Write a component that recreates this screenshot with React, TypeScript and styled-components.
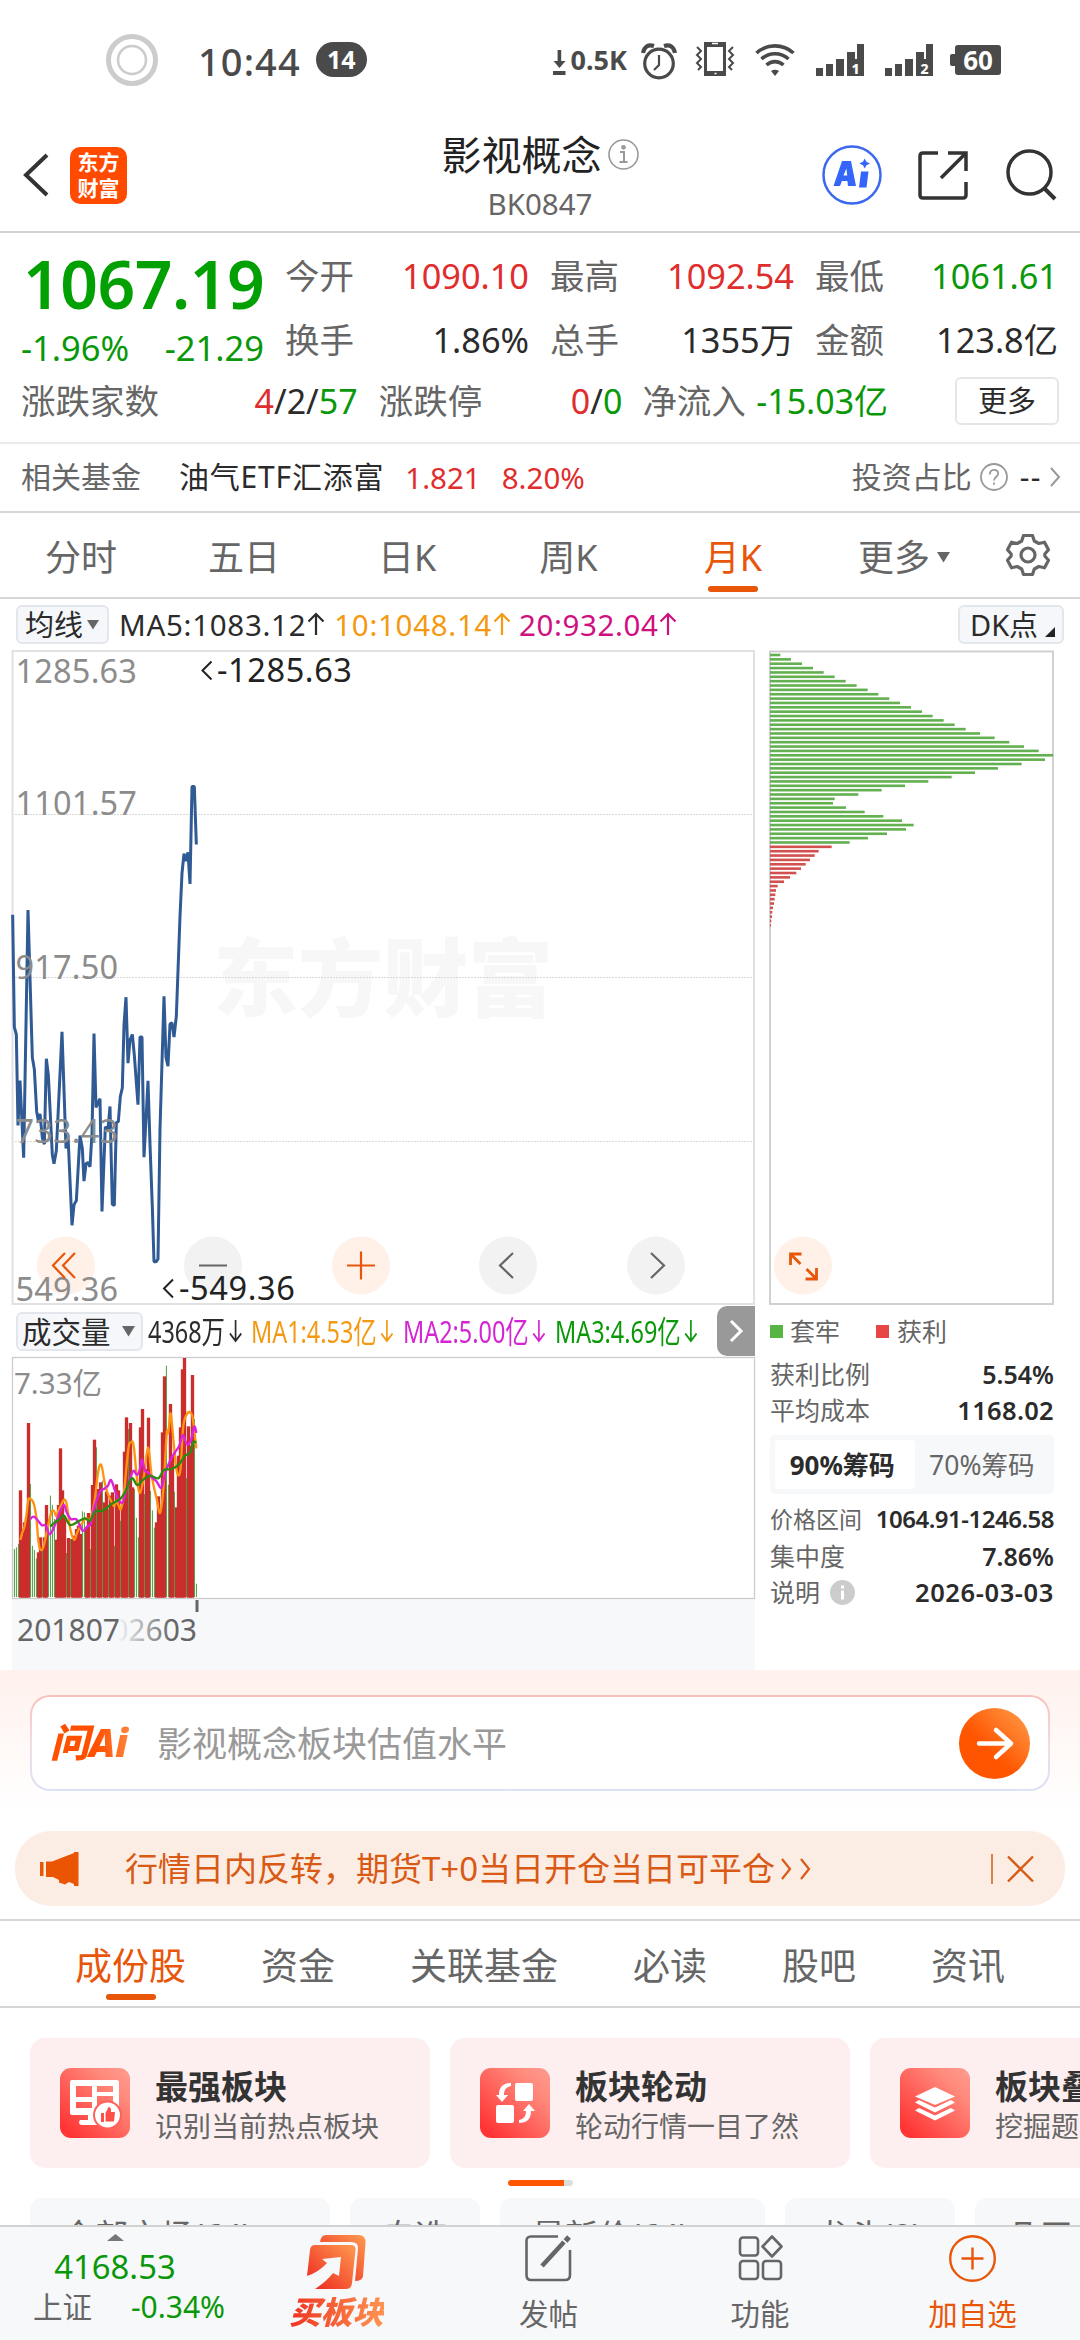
import React from 'react';
import styled, { createGlobalStyle, css } from 'styled-components';

const GlobalStyle = createGlobalStyle`
  * { box-sizing: border-box; }
  body { margin: 0; background: #fff; }
  text { white-space: pre; }
`;

const FONT = '"Noto Sans", "Noto Sans CJK SC", sans-serif';
const UP = '#e02d2d';
const DOWN = '#0a980a';
const INK = '#2b2b2b';
const GRAY = '#666';
const ORANGE = '#e8560a';

const row = css`
  display: flex;
  align-items: center;
`;

interface LabelProps {
  $size?: number;
  $color?: string;
  $weight?: number;
  $left?: number;
  $spacing?: number;
  $top?: number;
}

const Label = styled.span<LabelProps>`
  font-size: ${p => p.$size ?? 30}px;
  color: ${p => p.$color ?? GRAY};
  font-weight: ${p => p.$weight ?? 400};
  margin-left: ${p => p.$left ?? 0}px;
  margin-top: ${p => p.$top ?? 0}px;
  letter-spacing: ${p => p.$spacing ?? 0}px;
  line-height: 1;
  white-space: nowrap;
`;

const Page = styled.div`
  width: 1080px;
  height: 2340px;
  overflow: hidden;
  background: #fff;
  font-family: ${FONT};
  line-height: 1;
  display: flex;
  flex-direction: column;
  color: ${INK};
`;

const Icon = styled.svg<{ $left?: number; $top?: number }>`
  display: block;
  flex: none;
  margin-left: ${p => p.$left ?? 0}px;
  margin-top: ${p => p.$top ?? 0}px;
  overflow: visible;
`;

/* ---------- status bar ---------- */

const StatusBar = styled.header`
  ${row};
  height: 120px;
  padding: 0 79px 0 105px;
`;

const CountBadge = styled.span`
  ${row};
  justify-content: center;
  width: 51px;
  height: 35px;
  margin-left: 15px;
  border-radius: 18px;
  background: #4a4a4a;
  color: #fff;
  font-size: 25px;
  font-weight: 700;
`;

const StatusRight = styled.div`
  ${row};
  margin-left: auto;
`;

const Signal = ({ n, left }: { n: string; left: number }) => (
  <Icon $left={left} width="48" height="32" viewBox="0 0 48 32" fill="#4a4a4a">
    <path d="M0 24h7v8H0zM10 20h7v12h-7zM20 15h8v17h-8zM31 8h8v7h2V0h7v32H31z" />
    <text x="39.5" y="29.5" fontSize="14" fontWeight="800" fill="#fff" textAnchor="middle" fontFamily={FONT}>{n}</text>
  </Icon>
);

const Status = () => (
  <StatusBar>
    <Icon width="54" height="54" viewBox="0 0 54 54" fill="none" stroke="#ccc">
      <circle cx="27" cy="27" r="23.5" strokeWidth="5" />
      <circle cx="27" cy="27" r="14" strokeWidth="2.6" />
    </Icon>
    <Label $size={38} $color="#4a4a4a" $left={39} $weight={500} $top={2} $spacing={1.1}>10:44</Label>
    <CountBadge>14</CountBadge>
    <StatusRight>
      <Icon $top={5} width="13" height="25" viewBox="0 0 13 25" fill="#4a4a4a">
        <path d="M4.6 0h3.6v11h4.3L6.5 18 .5 11h4.1zM0 21h12.5v4H0z" />
      </Icon>
      <Label $size={27} $color="#4a4a4a" $weight={700} $left={5}>0.5K</Label>
      <Icon $left={15} $top={4} width="34" height="36" viewBox="0 0 34 36" fill="none" stroke="#4a4a4a" strokeWidth="3.2">
        <circle cx="17" cy="19.5" r="14.3" />
        <path d="M17 11v10l-5 5" strokeWidth="2.2" />
        <path d="M1 9C2 3 6 0 12 2M33 9C32 3 28 0 22 2" strokeWidth="4" />
      </Icon>
      <Icon $left={19} $top={-1} width="40" height="36" viewBox="0 0 40 36" fill="none" stroke="#4a4a4a">
        <rect x="10.5" y="2.5" width="19" height="31" strokeWidth="3" />
        <path d="M9 4h22M9 32h22" strokeWidth="4" />
        <path d="M2 6l4 4-4 4 4 4-4 4 4 4-3 3M38 6l-4 4 4 4-4 4 4 4-4 4 3 3" strokeWidth="2" />
        <path d="M17 2.5h6M19.500 32.500h2" stroke="#fff" strokeWidth="1.500" />
      </Icon>
      <Icon $left={20} width="40" height="33" viewBox="0 0 40 33" fill="none" stroke="#4a4a4a" strokeWidth="3.6">
        <path d="M1.500 10C12 .5 28 .5 38.500 10M6.500 16C14 9 26 9 33.500 16M11.500 22C16.500 17.500 23.500 17.500 28.500 22" />
        <path d="M16 28c2.400-1.800 5.600-1.800 8 0l-4 5z" fill="#4a4a4a" stroke="none" />
      </Icon>
      <Signal n="1" left={21} />
      <Signal n="2" left={21} />
      <Icon $left={17} width="51" height="30" viewBox="0 0 51 30">
        <path d="M8 0h40q3 0 3 3v24q0 3-3 3H8q-3 0-3-3v-6H2q-2 0-2-2v-8q0-2 2-2h3V3q0-3 3-3z" fill="#4a4a4a" />
        <text x="28" y="24.500" fontSize="26" fontWeight="700" fill="#fff" textAnchor="middle" fontFamily={FONT}>60</text>
      </Icon>
    </StatusRight>
  </StatusBar>
);

/* ---------- title bar ---------- */

const TitleBar = styled.div`
  display: grid;
  grid-template-columns: 270px 540px 270px;
  height: 113px;
  border-bottom: 2px solid #d2d2d2;
`;
const TitleLeft = styled.div`${row}; padding-left: 23px;`;
const TitleRight = styled.div`${row}; padding-left: 12px;`;
const TitleCenter = styled.div`
  display: flex;
  flex-direction: column;
  align-items: center;
  padding-top: 15px;
`;
const TitleLine = styled.div`${row};`;
const AppLogo = styled.div`
  width: 57px;
  height: 57px;
  margin-left: 21px;
  border-radius: 10px;
  background: #ff4a00;
  color: #fff;
  font-size: 21px;
  font-weight: 700;
  line-height: 26px;
  text-align: center;
  padding: 2px 0 0;
`;

const Title = () => (
  <TitleBar>
    <TitleLeft>
      <Icon width="26" height="44" viewBox="0 0 26 44" fill="none" stroke="#333" strokeWidth="4">
        <path d="M24 2L3 22l21 20" />
      </Icon>
      <AppLogo>东方<br />财富</AppLogo>
    </TitleLeft>
    <TitleCenter>
      <TitleLine>
        <Label $size={40} $color="#222">影视概念</Label>
        <Icon $left={6} width="31" height="31" viewBox="0 0 31 31" fill="none" stroke="#999" strokeWidth="1.6">
          <circle cx="15.500" cy="15.500" r="14.500" />
          <path d="M12 13h4v10M11.500 23h8" strokeWidth="2" />
          <circle cx="15.500" cy="8.300" r="1.600" fill="#999" />
        </Icon>
      </TitleLine>
      <Label $size={29.5} $color={GRAY} $top={14.5}>BK0847</Label>
    </TitleCenter>
    <TitleRight>
      <Icon width="60" height="60" viewBox="0 0 60 60">
        <circle cx="30" cy="30" r="28.500" fill="none" stroke="#3b68ef" strokeWidth="2.500" />
        <path d="M11.500 41L20 16h9l5 25h-8l-.6-5h-5.500L18 41zM21.500 30.500h3.700l-.8-7z" fill="#3566fb" fillRule="evenodd" />
        <path d="M39 26.500h7.500L44.500 42.500H37z" fill="#3566fb" />
        <path d="M42.700 13.500l1.700 3.300 3.600 1.700-3.600 1.700-1.700 3.300-1.700-3.300-3.600-1.700 3.600-1.700z" fill="#3566fb" />
      </Icon>
      <Icon $left={36} width="50" height="50" viewBox="0 0 50 50" fill="none" stroke="#333" strokeWidth="3.500">
        <path d="M20 3H5Q2 3 2 6v39q0 3 3 3h40q3 0 3-3V32" />
        <path d="M30 3h18v18M47 4L23 28" />
      </Icon>
      <Icon $left={38} width="50" height="50" viewBox="0 0 50 50" fill="none" stroke="#333" strokeWidth="3.500">
        <circle cx="23.500" cy="22.500" r="21.500" />
        <path d="M38 38l11 11" strokeWidth="4" />
      </Icon>
    </TitleRight>
  </TitleBar>
);

/* ---------- quote ---------- */

const Quote = styled.section`
  height: 211px;
  padding: 11px 21px 0;
  border-bottom: 2px solid #ebebeb;
`;
const QuoteGrid = styled.div`
  display: grid;
  grid-template-columns: 243px 244px 244px 243px;
  grid-template-rows: 64px 64px;
  column-gap: 21px;
`;
const PriceCell = styled.div`
  grid-row: 1 / 3;
  padding-top: 6px;
  display: flex;
  flex-direction: column;
`;
const Spread = styled.div<{ $top?: number }>`
  ${row};
  justify-content: space-between;
  margin-top: ${p => p.$top ?? 0}px;
`;
const QuoteFoot = styled.div`
  ${row};
  height: 58px;
`;
const FootCell = styled.div<{ $width: number; $left?: number }>`
  ${row};
  justify-content: space-between;
  width: ${p => p.$width}px;
  margin-left: ${p => p.$left ?? 0}px;
`;
const MoreButton = styled.button`
  width: 104px;
  height: 48px;
  margin: 0 0 0 67px;
  padding: 0;
  border: 2px solid #e6e6e6;
  border-radius: 6px;
  background: #fff;
  font: 400 29px/1 ${FONT};
  color: ${INK};
`;

const Stat = ({ name, value, color }: { name: string; value: string; color: string }) => (
  <Spread>
    <Label $size={34.5}>{name}</Label>
    <Label $size={34.3} $color={color}>{value}</Label>
  </Spread>
);

const QuotePanel = () => (
  <Quote>
    <QuoteGrid>
      <PriceCell>
        <Label $size={66} $weight={600} $color="#02a002" $spacing={-0.5} $left={2}>1067.19</Label>
        <Spread $top={15}>
          <Label $size={34.5} $color={DOWN}>-1.96%</Label>
          <Label $size={34.5} $color={DOWN}>-21.29</Label>
        </Spread>
      </PriceCell>
      <Stat name="今开" value="1090.10" color={UP} />
      <Stat name="最高" value="1092.54" color={UP} />
      <Stat name="最低" value="1061.61" color={DOWN} />
      <Stat name="换手" value="1.86%" color={INK} />
      <Stat name="总手" value="1355万" color={INK} />
      <Stat name="金额" value="123.8亿" color={INK} />
    </QuoteGrid>
    <QuoteFoot>
      <FootCell $width={337}>
        <Label $size={34.5}>涨跌家数</Label>
        <Label $size={34} $color={INK}><Label $size={34} $color={UP}>4</Label>/2/<Label $size={34} $color={DOWN}>57</Label></Label>
      </FootCell>
      <FootCell $width={244} $left={21}>
        <Label $size={34.5}>涨跌停</Label>
        <Label $size={34} $color={INK}><Label $size={34} $color={UP}>0</Label>/<Label $size={34} $color={DOWN}>0</Label></Label>
      </FootCell>
      <FootCell $width={246} $left={20}>
        <Label $size={34.5}>净流入</Label>
        <Label $size={34} $color={DOWN}>-15.03亿</Label>
      </FootCell>
      <MoreButton>更多</MoreButton>
    </QuoteFoot>
  </Quote>
);

const FundRow = styled.section`
  ${row};
  height: 70px;
  padding: 0 20px 0 21px;
  border-bottom: 2px solid #d6d6d6;
`;
const PushRight = styled.div`${row}; margin-left: auto;`;

const Fund = () => (
  <FundRow>
    <Label $size={30}>相关基金</Label>
    <Label $size={30} $color={INK} $left={38} $spacing={0.8}>油气ETF汇添富</Label>
    <Label $size={29.5} $color={UP} $left={21}>1.821</Label>
    <Label $size={29.5} $color={UP} $left={21}>8.20%</Label>
    <PushRight>
      <Label $size={30}>投资占比</Label>
      <Icon $left={8} width="28" height="28" viewBox="0 0 28 28" fill="none" stroke="#999" strokeWidth="1.800">
        <circle cx="14" cy="14" r="13" />
        <path d="M9.800 11.500c0-6 8.400-6 8.400-.8 0 3-4.200 3.200-4.200 6.800M14 19.500v2.200" />
      </Icon>
      <Label $size={30} $color={INK} $left={12} $spacing={1.500}>--</Label>
      <Icon $left={8} width="10" height="20" viewBox="0 0 10 20" fill="none" stroke="#999" strokeWidth="2">
        <path d="M1 1l8 9-8 9" />
      </Icon>
    </PushRight>
  </FundRow>
);

/* ---------- tabs ---------- */

const TabBar = styled.nav<{ $height: number }>`
  display: flex;
  height: ${p => p.$height}px;
  border-bottom: 2px solid #d6d6d6;
`;
const Tab = styled.div<{ $left: number; $active?: boolean; $top: number; $size: number }>`
  display: flex;
  flex-direction: column;
  align-items: center;
  margin-left: ${p => p.$left}px;
  padding-top: ${p => p.$top}px;
  font-size: ${p => p.$size}px;
  white-space: nowrap;
  color: ${p => (p.$active ? ORANGE : GRAY)};
  &::after {
    content: '';
    display: ${p => (p.$active ? 'block' : 'none')};
    width: 50px;
    height: 6px;
    margin-top: 10px;
    border-radius: 3px;
    background: ${ORANGE};
  }
`;
const TabLine = styled.div`${row};`;

const Triangle = ({ size, left, color = GRAY, top = 0 }: { size: number; left: number; color?: string; top?: number }) => (
  <Icon $left={left} $top={top} width={size} height={size * 0.8} viewBox="0 0 10 8" fill={color}>
    <path d="M0 0h10L5 8z" />
  </Icon>
);

const PeriodTabs = () => (
  <TabBar $height={86}>
    <Tab $left={45} $top={27} $size={36}>分时</Tab>
    <Tab $left={91} $top={27} $size={36}>五日</Tab>
    <Tab $left={98} $top={27} $size={36}>日K</Tab>
    <Tab $left={103} $top={27} $size={36}>周K</Tab>
    <Tab $left={106} $top={27} $size={36} $active>月K</Tab>
    <Tab $left={96} $top={27} $size={36}>
      <TabLine>更多<Triangle size={13} left={7} top={-3} /></TabLine>
    </Tab>
    <Icon $left={57} $top={20} width="42" height="44" viewBox="0 0 42 44" fill="none" stroke={GRAY} strokeWidth="3.200" strokeLinejoin="round">
      <path d="M16.500 2.500h9l1.800 5.500 4.500 2.500 5.700-1.300 4 7.500-3.700 4.300v2l3.700 4.300-4 7.500-5.700-1.300-4.500 2.500-1.800 5.500h-9L14.700 36l-4.500-2.500-5.700 1.300-4-7.500L4.200 23v-2L.5 16.700l4-7.500 5.700 1.300L14.700 8z" />
      <circle cx="21" cy="22" r="7" />
    </Icon>
  </TabBar>
);

/* ---------- indicator legend ---------- */

const LegendRow = styled.div`
  ${row};
  height: 50px;
  padding: 0 16px;
`;
const Chip = styled.div<{ $width: number; $pad: number }>`
  ${row};
  width: ${p => p.$width}px;
  height: 39px;
  padding-left: ${p => p.$pad}px;
  border: 2px solid #e3e6ea;
  border-radius: 6px;
  background: #f5f7fa;
  flex: none;
`;

const Arrow = ({ color, down, left = 3 }: { color: string; down?: boolean; left?: number }) => (
  <Icon $left={left} width="18" height="22" viewBox="0 0 18 22" fill="none" stroke={color} strokeWidth="2.200">
    {down ? <path d="M9 0v21M1.500 13.500L9 21l7.500-7.500" /> : <path d="M9 22V1M1.500 8.500L9 1l7.500 7.500" />}
  </Icon>
);

const MaLegend = () => (
  <LegendRow>
    <Chip $width={93} $pad={7}>
      <Label $size={29} $color={INK}>均线</Label>
      <Triangle size={12} left={4} />
    </Chip>
    <Label $size={29.5} $spacing={0.7} $color={INK} $left={10}>MA5:1083.12</Label>
    <Arrow color={INK} left={1} />
    <Label $size={29.5} $spacing={0.7} $color="#f39a12" $left={9}>10:1048.14</Label>
    <Arrow color="#f39a12" left={1} />
    <Label $size={29.5} $spacing={0.6} $color="#d0107f" $left={8}>20:932.04</Label>
    <Arrow color="#d0107f" left={1} />
    <PushRight>
      <Chip $width={106} $pad={10}>
        <Label $size={29} $color={INK}>DK点</Label>
        <Icon $left={7} $top={16} width="10" height="10" viewBox="0 0 10 10"><path d="M10 0v10H0z" fill="#222" /></Icon>
      </Chip>
    </PushRight>
  </LegendRow>
);

/* ---------- charts ---------- */

const ChartArea = styled.section`
  display: flex;
  height: 1021px;
  padding-left: 12px;
`;
const ChartColumn = styled.div`
  width: 743px;
`;
const ChipColumn = styled.div`
  width: 284px;
  margin-left: 15px;
`;

const linePoints =
  '38,636 43,895 49,912 54,1122 60,1018 71,1196 84,625 97,965 103,992 110,1090 116,1115 120,1095 127,1150 133,1165 139,968 145,1005 157,1190 162,1210 169,1180 186,906 198,1175 204,1145 216,1352 222,1305 229,1295 240,1145 247,1175 252,1250 258,1210 264,1207 270,1217 276,1140 282,910 288,1080 300,1060 306,1320 316,1125 324,1130 330,1078 337,1304 343,1306 349,1115 355,1113 361,1055 367,1035 372,890 378,826 384,978 390,925 397,912 403,960 414,1074 420,918 426,918 432,1195 444,1019 450,1165 457,1310 462,1436 468,1436 474,1430 480,1130 492,824 498,965 504,985 510,888 516,885 522,918 529,870 540,640 546,540 552,495 558,512 564,492 570,565 576,340 583,340 589,474';

const axis: Array<[string, number]> = [
  ['1285.63', 684], ['1101.57', 816], ['917.50', 980], ['733.43', 1143.500], ['549.36', 1302],
];

const PriceChart = () => (
  <Icon width="743" height="656" viewBox="12 650 743 656" fontFamily={FONT}>
    <text x="213" y="1011" fontSize="85" fontWeight="900" fill="#f7f7f7">东方财富</text>
    <path d="M12 815.500H754M12 978.500H754M12 1142.500H754" stroke="#d8d8d8" strokeDasharray="2 1" />
    <rect x="12.500" y="652" width="741.500" height="653" fill="none" stroke="#e1e1e1" strokeWidth="2" />
    <circle cx="66" cy="1266.500" r="29" fill="#fff0e8" />
    <circle cx="213" cy="1266.500" r="29" fill="#f2f2f2" />
    <circle cx="361" cy="1266.500" r="29" fill="#fff0e8" />
    <circle cx="508" cy="1266.500" r="29" fill="#f2f2f2" />
    <circle cx="656" cy="1266.500" r="29" fill="#f2f2f2" />
    <g transform="translate(0 640) scale(0.33333 0.43365)">
      <polyline points={linePoints} fill="none" stroke="#2f5a94" strokeWidth="3" vectorEffect="non-scaling-stroke" strokeLinejoin="bevel" />
    </g>
    <g fontSize="32.500" fill="#8c8c8c" letterSpacing="0.200">
      {axis.map(([t, y]) => <text key={t} x={15.500} y={y}>{t}</text>)}
    </g>
    <g fontSize="32.500" fill="#222" letterSpacing="0.600">
      <text x="217" y="682.500">-1285.63</text>
      <text x="179" y="1300.500">-549.36</text>
      <path d="M211.500 662.500l-9 9 9 9M173 1280.500l-9 9 9 9" fill="none" stroke="#222" strokeWidth="2" />
    </g>
    <g fill="none" stroke={ORANGE} strokeWidth="2.200">
      <path d="M65 1254l-12 12.500 12 12.500M75 1254l-12 12.500 12 12.500M347 1266.500h28M361 1252.500v28" />
      <path d="M199 1266.500h28M513 1254l-13 12.500 13 12.500M651 1254l13 12.500-13 12.500" stroke={GRAY} />
    </g>
  </Icon>
);

const VolumeLegend = styled.div`
  ${row};
  height: 52px;
  padding-left: 4px;
`;
const Narrow = styled.div<{ $width: number; $scale: number; $left: number }>`
  width: ${p => p.$width}px;
  margin-left: ${p => p.$left}px;
  & > div {
    ${row};
    width: max-content;
    transform: scaleX(${p => p.$scale});
    transform-origin: left center;
  }
`;
const NextButton = styled.div`
  ${row};
  justify-content: center;
  width: 38px;
  height: 50px;
  margin-left: auto;
  border-radius: 10px 0 0 10px;
  background: #999;
`;

interface MetricProps { text: string; color: string; width: number; left: number; scale: number }
const Metric = ({ text, color, width, left, scale }: MetricProps) => (
  <Narrow $width={width} $left={left} $scale={scale}>
    <div>
      <Label $size={31} $color={color}>{text}</Label>
      <Arrow color={color} down left={5} />
    </div>
  </Narrow>
);

const volumes =
  '780g 775g 765g 604r 740r 700r 690r 402r 585g 770g 783g 808g 790r 745r 785g 745r 648r 690g 620g 648g 690g 752r 648r 478r 604r 680r 792g 747r 750g 750r 740r 720r 710r 735r 667g 670g 715r 672r 780g 588r 452r 475g 600r 580r 575g 640r 608r 660g 620r 610r 770g 586r 604r 695g 640r 488r 385r 420g 402r 595r 600g 687g 745g 415r 360r 615g 540r 386r 606g 664g 716g 700r 622r 670r 430r 262r 230g 587g 345r 500r 608g 655r 500r 415r 241r 207r 567g 412r 470r 258r 390g 884g'
    .split(' ')
    .map(v => ({ top: parseInt(v, 10), up: v.endsWith('r') }));

const smooth = (s: string) => {
  const p = s.split(' ').map(v => v.split(',').map(Number));
  let d = `M${p[0][0]} ${p[0][1]}`;
  for (let i = 0; i < p.length - 1; i++) {
    const a = p[Math.max(0, i - 1)], b = p[i], c = p[i + 1], e = p[Math.min(p.length - 1, i + 2)];
    d += `C${b[0] + (c[0] - a[0]) / 6} ${b[1] + (c[1] - a[1]) / 6} ${c[0] - (e[0] - b[0]) / 6} ${c[1] - (e[1] - b[1]) / 6} ${c[0]} ${c[1]}`;
  }
  return d;
};

const ma1 = smooth('61,753 67,730 73,715 79,680 85,632 91,630 97,635 103,650 109,685 115,755 121,782 130,775 139,735 151,680 157,665 163,668 169,682 175,665 187,640 193,632 200,645 211,720 222,752 230,735 241,712 258,688 270,692 283,640 295,545 304,528 313,575 322,610 335,640 343,652 349,635 355,648 363,660 372,610 385,480 393,460 401,470 411,570 420,612 432,560 444,475 455,560 470,630 480,672 490,600 500,435 505,430 512,373 520,450 530,545 541,545 550,410 563,372 575,375 580,400 589,478');
const ma2 = smooth('91,690 100,683 110,690 125,708 138,710 148,736 160,720 175,680 191,648 200,670 212,690 230,692 248,725 262,712 272,705 283,655 300,608 312,600 324,590 333,573 345,605 355,632 368,640 380,600 395,555 402,545 411,558 420,540 426,512 435,545 445,550 455,565 470,578 484,596 495,555 510,515 525,490 538,470 549,438 560,465 572,455 583,413 589,432');
const ma3 = smooth('151,712 165,700 180,690 192,680 210,708 235,697 255,688 270,695 285,668 308,665 335,645 360,630 375,610 395,568 412,588 430,572 450,560 475,568 492,543 515,540 538,525 555,500 570,492 580,460 589,460');

const VolumeChart = () => (
  <Icon width="743" height="242" viewBox="12 1358 743 242" fontFamily={FONT}>
    <rect x="12.500" y="1358.500" width="742" height="241" fill="#fff" stroke="#ccc" strokeWidth="1.300" />
    <text x="14" y="1395" fontSize="29.500" fill="#8c8c8c">7.33亿</text>
    <g transform="translate(0 1290) scale(0.33333)">
      {volumes.map((v, i) => v.up && (
        <rect key={i} x={38.500 + i * 6} y={v.top} width={10} height={926 - v.top} fill="#cb2d2d" />
      ))}
      {volumes.map((v, i) => !v.up && (
        <rect key={i} x={41.700 + i * 6} y={v.top} width={3} height={924 - v.top} fill="#2b8a1e" fillOpacity={0.850} />
      ))}
      <g fill="none" strokeWidth="7">
        <path d={ma1} stroke="#ff920f" />
        <path d={ma2} stroke="#dd22dd" />
        <path d={ma3} stroke="#2b8a12" />
      </g>
    </g>
  </Icon>
);

const DateAxis = styled.div`
  height: 71px;
  background: #f7f8fa;
`;
const DateLabels = () => (
  <DateAxis>
    <Icon width="743" height="71" viewBox="12 1600 743 71" fontFamily={FONT}>
      <defs>
        <linearGradient id="dateFade" gradientUnits="userSpaceOnUse" x1="117" x2="172" y1="0" y2="0">
          <stop offset="0" stopColor="#f7f8fa" />
          <stop offset="1" stopColor="#f7f8fa" stopOpacity="0" />
        </linearGradient>
      </defs>
      <rect x="195.500" y="1601" width="3" height="12" fill="#666" />
      <text x="94" y="1642" fontSize="30" fill="#666">202603</text>
      <rect x="90" y="1615" width="29" height="32" fill="#f7f8fa" />
      <rect x="117" y="1615" width="55" height="32" fill="url(#dateFade)" />
      <text x="17" y="1642" fontSize="30" fill="#666">201807</text>
    </Icon>
  </DateAxis>
);

const chipWidths = [
  121, 153, 186, 219, 251, 284, 317, 350, 383, 415, 448, 480, 513, 546, 578, 611, 644, 677, 720, 764, 808, 852, 896, 939, 915, 845, 774,
  705, 635, 565, 495, 425, 355, 284, 279, 318, 374, 430, 486, 521, 498, 441, 384, 329, 275, 236, 224, 210, 197, 183, 169, 150, 132, 113,
  108, 106, 104, 102, 99, 97, 96, 94, 93,
];

const ChipChart = () => (
  <Icon $left={-1} width="285" height="656" viewBox="769 650 285 656">
    <rect x="770" y="652.500" width="283" height="652.500" fill="none" stroke="#ccc" strokeWidth="1.800" />
    {chipWidths.map((w, i) => (
      <rect key={i} x={770} y={640 + (48 + i * 13.080) / 3 - 1.300} width={(w - 90) / 3} height={2.600} fill={i < 44 ? '#62b04f' : '#d2504e'} />
    ))}
    <circle cx="803" cy="1266.500" r="29" fill="#fff0e8" />
    <path d="M790.500 1266v-11h11M791.500 1256l9 9M816.500 1269v11h-11M815.500 1279l-9-9" fill="none" stroke={ORANGE} strokeWidth="2.800" />
  </Icon>
);

const ChipLegend = styled.div`
  ${row};
  height: 52px;
`;
const Swatch = styled.span<{ $color: string; $left?: number }>`
  width: 13px;
  height: 13px;
  margin-left: ${p => p.$left ?? 0}px;
  background: ${p => p.$color};
`;
const InfoRow = styled.div<{ $height: number }>`
  ${row};
  height: ${p => p.$height}px;
  justify-content: space-between;
`;
const Segments = styled.div`
  ${row};
  height: 59px;
  margin: 5px 0 6px;
  padding: 5px;
  border-radius: 5px;
  background: #f7f8fa;
`;
const Segment = styled.div<{ $active?: boolean }>`
  ${row};
  justify-content: center;
  flex: 1;
  height: 49px;
  padding-right: ${p => (p.$active ? 5 : 0)}px;
  border-radius: 4px;
  font-size: ${p => (p.$active ? 26 : 26.5)}px;
  font-weight: ${p => (p.$active ? 700 : 400)};
  color: ${p => (p.$active ? INK : GRAY)};
  background: ${p => (p.$active ? '#fff' : 'transparent')};
`;

const ChipDistribution = () => (
  <ChipColumn>
    <ChipChart />
    <ChipLegend>
      <Swatch $color="#59b541" />
      <Label $size={25} $left={7}>套牢</Label>
      <Swatch $color="#e84646" $left={36} />
      <Label $size={25} $left={8}>获利</Label>
    </ChipLegend>
    <InfoRow $height={34}>
      <Label $size={25}>获利比例</Label>
      <Label $size={25} $weight={600} $color={INK}>5.54%</Label>
    </InfoRow>
    <InfoRow $height={39}>
      <Label $size={25}>平均成本</Label>
      <Label $size={25.500} $weight={600} $color={INK} $spacing={0.3}>1168.02</Label>
    </InfoRow>
    <Segments>
      <Segment $active>90%筹码</Segment>
      <Segment>70%筹码</Segment>
    </Segments>
    <InfoRow $height={38}>
      <Label $size={23}>价格区间</Label>
      <Label $size={24} $weight={600} $color={INK} $spacing={-0.500}>1064.91-1246.58</Label>
    </InfoRow>
    <InfoRow $height={36}>
      <Label $size={25}>集中度</Label>
      <Label $size={25} $weight={600} $color={INK}>7.86%</Label>
    </InfoRow>
    <InfoRow $height={37}>
      <TabLine>
        <Label $size={25}>说明</Label>
        <Icon $left={10} width="25" height="25" viewBox="0 0 25 25">
          <circle cx="12.500" cy="12.500" r="12.500" fill="#ccc" />
          <path d="M11 5.500h3v3h-3zM11 10.500h3v9h-3z" fill="#fff" />
        </Icon>
      </TabLine>
      <Label $size={25.500} $weight={600} $color={INK} $spacing={0.6}>2026-03-03</Label>
    </InfoRow>
  </ChipColumn>
);

const Charts = () => (
  <ChartArea>
    <ChartColumn>
      <PriceChart />
      <VolumeLegend>
        <Chip $width={127} $pad={4}>
          <Label $size={29.500} $color={INK}>成交量</Label>
          <Triangle size={13} left={11} />
        </Chip>
        <Metric text="4368万" color={INK} left={5} width={103} scale={0.755} />
        <Metric text="MA1:4.53亿" color="#f39a12" left={0} width={152} scale={0.755} />
        <Metric text="MA2:5.00亿" color="#d325d3" left={0} width={152} scale={0.755} />
        <Metric text="MA3:4.69亿" color={DOWN} left={0} width={145} scale={0.755} />
        <NextButton>
          <Icon width="14" height="22" viewBox="0 0 14 22" fill="none" stroke="#fff" strokeWidth="3"><path d="M2 1l10 10L2 21" /></Icon>
        </NextButton>
      </VolumeLegend>
      <VolumeChart />
      <DateLabels />
    </ChartColumn>
    <ChipDistribution />
  </ChartArea>
);

/* ---------- assistant + banner ---------- */

const AskSection = styled.section`
  height: 161px;
  padding: 25px 30px 0;
  background: linear-gradient(#fff1ed, #fff 140px);
`;
const AskBox = styled.div`
  ${row};
  height: 96px;
  padding: 0 18px;
  border: 2px solid transparent;
  border-radius: 20px;
  background: linear-gradient(#fff, #fff) padding-box, linear-gradient(#f9c0b8, #f2dbe2 50%, #dbe3f6) border-box;
`;
const AskLogo = styled.span`
  width: 85px;
  height: 44px;
  line-height: 42px;
  font-size: 39px;
  font-weight: 900;
  font-style: italic;
  white-space: nowrap;
  background: linear-gradient(90deg, #ff5000 55%, #ff8c46);
  -webkit-background-clip: text;
  color: transparent;
`;
const Banner = styled.section`
  ${row};
  height: 75px;
  margin: 0 15px 13px;
  padding: 0 31px 0 25px;
  border-radius: 36px;
  background: #fcede4;
`;

const Ask = () => (
  <>
    <AskSection>
      <AskBox>
        <AskLogo>问Ai</AskLogo>
        <Label $size={35} $color="#999" $left={22}>影视概念板块估值水平</Label>
        <PushRight>
          <Icon width="71" height="71" viewBox="0 0 71 71">
            <defs>
              <linearGradient id="go" x1="0.200" y1="0.800" x2="0.900" y2="0.100">
                <stop offset="0.300" stopColor="#ff5500" />
                <stop offset="1" stopColor="#ff9340" />
              </linearGradient>
            </defs>
            <circle cx="35.500" cy="35.500" r="35.500" fill="url(#go)" />
            <path d="M20 35.500h32M37 22l15 13.500L37 49" fill="none" stroke="#fff" strokeWidth="4.500" strokeLinecap="round" strokeLinejoin="round" />
          </Icon>
        </PushRight>
      </AskBox>
    </AskSection>
    <Banner>
      <Icon width="39" height="34" viewBox="0 0 39 34" fill="#ea5504">
        <path d="M0 10h3.500v14H0zM6 9.500h6L34 1V0h4.500v34H34v-2l-5-2-4 2.500-6-2V28l-6-3H6z" />
      </Icon>
      <Label $size={33} $color="#d95a14" $left={46}>行情日内反转，期货T+0当日开仓当日可平仓</Label>
      <Icon $left={6} width="32" height="26" viewBox="0 0 32 26" fill="none" stroke="#d95a14" strokeWidth="2.200">
        <path d="M1 3l8 10-8 10M20 3l8 10-8 10" />
      </Icon>
      <PushRight>
        <Icon width="43" height="30" viewBox="0 0 43 30" fill="none" stroke="#d95a14" strokeWidth="2.400">
          <path d="M1 0v30" strokeWidth="1.500" />
          <path d="M17 2.500l25 25M42 2.500l-25 25" />
        </Icon>
      </PushRight>
    </Banner>
  </>
);

/* ---------- lower tabs and cards ---------- */

const LowerTabs = styled(TabBar)`
  border-top: 2px solid #d6d6d6;
`;

const contentTabs: Array<[string, number]> = [['成份股', 75], ['资金', 75], ['关联基金', 75], ['必读', 75], ['股吧', 75], ['资讯', 75]];

const CardStrip = styled.div`
  display: flex;
  gap: 20px;
  height: 160px;
  padding: 30px 0 0 30px;
`;
const Card = styled.article`
  display: flex;
  flex: none;
  width: 400px;
  height: 130px;
  padding: 30px 0 0 30px;
  border-radius: 15px;
  background: #fdefef;
`;
const CardText = styled.div`
  display: flex;
  flex-direction: column;
  margin-left: 25px;
  padding-top: 2px;
`;
const CardIcon = ({ children }: { children: React.ReactNode }) => (
  <Icon width="70" height="70" viewBox="0 0 70 70">
    <defs>
      <linearGradient id="cardRed" x1="0" y1="1" x2="1" y2="0">
        <stop offset="0.100" stopColor="#ff3434" />
        <stop offset="0.750" stopColor="#ff8a7c" />
        <stop offset="1" stopColor="#ff9c90" />
      </linearGradient>
    </defs>
    <rect width="70" height="70" rx="11" fill="url(#cardRed)" />
    {children}
  </Icon>
);
const FeatureCard = ({ title, note, children }: { title: string; note: string; children: React.ReactNode }) => (
  <Card>
    <CardIcon>{children}</CardIcon>
    <CardText>
      <Label $size={33} $weight={700} $color="#333">{title}</Label>
      <Label $size={28} $top={9}>{note}</Label>
    </CardText>
  </Card>
);

const Pager = styled.div`
  width: 65px;
  height: 6px;
  margin: 12px 0 12px 508px;
  border-radius: 3px;
  background: linear-gradient(90deg, #ff5500 56px, #ddd 56px);
  flex: none;
`;
const FilterStrip = styled.div`
  display: flex;
  gap: 20px;
  height: 27px;
  padding-left: 30px;
  overflow: hidden;
  flex: none;
`;
const Filter = styled.div<{ $width: number }>`
  flex: none;
  width: ${p => p.$width}px;
  height: 75px;
  padding: 21px 0 0 32px;
  border-radius: 12px;
  background: #f7f8fa;
  font-size: 33px;
  color: ${GRAY};
  white-space: nowrap;
`;

const Lower = () => (
  <>
    <LowerTabs $height={89}>
      {contentTabs.map(([t, left], i) => (
        <Tab key={t} $left={left} $top={26} $size={37} $active={i === 0}>{t}</Tab>
      ))}
    </LowerTabs>
    <CardStrip>
      <FeatureCard title="最强板块" note="识别当前热点板块">
        <path d="M12 12h45q2 0 2 2v31q0 2-2 2H12q-2 0-2-2V14q0-2 2-2zM16 18v11h16V18zM37 18v6h16v-6zM16 34v6h16v-6zM37 28v10h16V28z" fill="#fff" fillRule="evenodd" />
        <path d="M20 52h18v5H22q-3 0-3-3zM28 45h8v9h-8z" fill="#fff" />
        <circle cx="47.500" cy="47" r="13.500" fill="#fff" stroke="#ff605a" strokeWidth="2" />
        <path d="M41 45h3v9h-3zM45.500 45l3-6q3 0 2.500 5h4l-1 9.500h-8.500z" fill="#ff4f4b" />
      </FeatureCard>
      <FeatureCard title="板块轮动" note="轮动行情一目了然">
        <rect x="35" y="15" width="18" height="18" rx="2" fill="#fff" />
        <rect x="16" y="37" width="18" height="18" rx="2" fill="#fff" />
        <path d="M31 15v3c-5 1-7 4-7 9h4l-6 7-6-7h3c0-8 4-12 12-12zM39 55v-3c5-1 7-4 7-9h-3l6-7 6 7h-4c0 8-4 12-12 12z" fill="#fff" />
      </FeatureCard>
      <FeatureCard title="板块叠加" note="挖掘题材共振">
        <path d="M35 19l20 9.500L35 37l-20-8.500z" fill="#fff" />
        <path d="M15 34.500l4-2.500 16 7.500 16-7.500 4 2.500L35 44.500zM15 42.500l4-2.500 16 7.500 16-7.500 4 2.500L35 52.500z" fill="#fff" />
      </FeatureCard>
    </CardStrip>
    <Pager />
    <FilterStrip>
      <Filter $width={300}>全部市场(64)</Filter>
      <Filter $width={130}>自选</Filter>
      <Filter $width={265}>最新价(64)</Filter>
      <Filter $width={170}>龙头(8)</Filter>
      <Filter $width={170}>几天</Filter>
    </FilterStrip>
  </>
);

/* ---------- bottom bar ---------- */

const BottomBar = styled.footer`
  display: grid;
  grid-template-columns: 230px 213px 211px 212px 213px;
  height: 115px;
  flex: none;
  border-top: 2px solid #d2d2d2;
  background: #f7f8fa;
`;
const IndexCell = styled.div`
  display: flex;
  flex-direction: column;
  align-items: center;
  padding-top: 7px;
`;
const IndexLine = styled.div`
  ${row};
  width: 192px;
  margin: 8px 0 0 28px;
  justify-content: space-between;
`;
const Action = styled.div`
  display: flex;
  flex-direction: column;
  align-items: center;
  padding-top: 8px;
`;
const BuyText = styled.span`
  font-size: 31.500px;
  font-weight: 900;
  font-style: italic;
  line-height: 36px;
  margin-top: 5px;
  background: linear-gradient(90deg, #ee3322, #ff9450);
  -webkit-background-clip: text;
  color: transparent;
`;

const Bottom = () => (
  <BottomBar>
    <IndexCell>
      <Icon width="17" height="7" viewBox="0 0 17 7"><path d="M0 7l8.500-7L17 7z" fill="#777" /></Icon>
      <Label $size={32.800} $color={DOWN} $top={10}>4168.53</Label>
      <IndexLine>
        <Label $size={29.500}>上证</Label>
        <Label $size={30} $color={DOWN}>-0.34%</Label>
      </IndexLine>
    </IndexCell>
    <Action>
      <Icon width="60" height="54" viewBox="0 0 60 54">
        <defs>
          <linearGradient id="buy" x1="0" y1="1" x2="1" y2="0">
            <stop offset="0.100" stopColor="#ee3023" />
            <stop offset="1" stopColor="#ff9a50" />
          </linearGradient>
        </defs>
        <path d="M13 7Q14 0 19 0h32q8 0 7.500 8L56 41q-.5 5-8 5l3-32q1-7-7-7z" fill="url(#buy)" />
        <path d="M8 10h36q5 0 4.500 5L45 48q-.5 6-6 6H8q12-8 18-16l6 3 2-19-19 2 5 4Q12 37 0 41L3 15q.5-5 5-5z" fill="url(#buy)" />
      </Icon>
      <BuyText>买板块</BuyText>
    </Action>
    <Action>
      <Icon width="47" height="47" viewBox="0 0 47 47" fill="none" stroke={GRAY} strokeWidth="2.600">
        <path d="M33 1.500H6Q1.500 1.500 1.500 6v34q0 5 4.500 5h34q5 0 5-5V15" />
        <path d="M17 31l22-24" strokeWidth="4.500" />
        <path d="M40.500 6l3.500-4" strokeWidth="5" />
      </Icon>
      <Label $size={29.500} $top={17}>发帖</Label>
    </Action>
    <Action>
      <Icon width="45" height="47" viewBox="0 0 45 47" fill="none" stroke={GRAY} strokeWidth="2.600">
        <rect x="2" y="2.500" width="18" height="18" rx="3" />
        <rect x="2" y="26" width="18" height="18" rx="3" />
        <rect x="25" y="26" width="18" height="18" rx="3" />
        <path d="M34 1.500l9.500 10L34 21.500l-9.500-10z" strokeLinejoin="round" />
      </Icon>
      <Label $size={29.500} $top={17}>功能</Label>
    </Action>
    <Action>
      <Icon width="47" height="47" viewBox="0 0 47 47" fill="none" stroke={ORANGE} strokeWidth="2.400">
        <circle cx="23.500" cy="23.500" r="22.300" />
        <path d="M12.500 23.500h22M23.500 12.500v22" />
      </Icon>
      <Label $size={29.500} $color={ORANGE} $top={17}>加自选</Label>
    </Action>
  </BottomBar>
);

export default function App() {
  return (
    <Page>
      <GlobalStyle />
      <Status />
      <Title />
      <QuotePanel />
      <Fund />
      <PeriodTabs />
      <MaLegend />
      <Charts />
      <Ask />
      <Lower />
      <Bottom />
    </Page>
  );
}
